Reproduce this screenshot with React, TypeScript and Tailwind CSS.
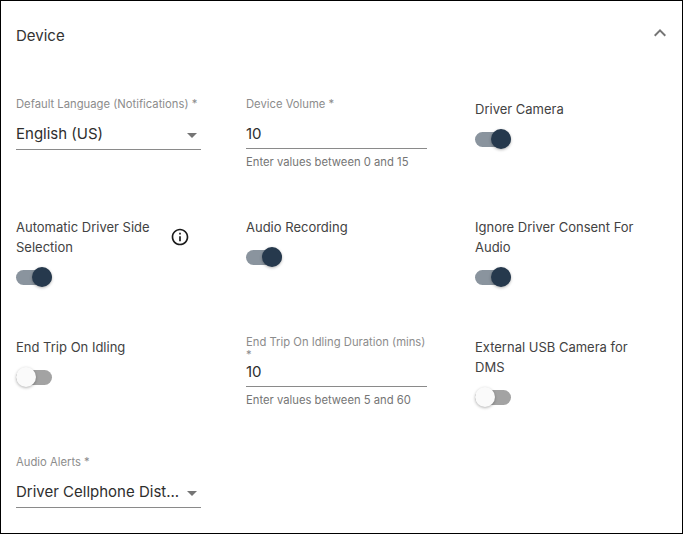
const font = "[font-family:Inter,'Liberation_Sans',sans-serif]"

function Toggle({ on = true }: { on?: boolean }) {
    return (
        <div className="relative h-5 w-9">
            <div className={`absolute left-0 top-[2.5px] h-[15px] w-[36px] rounded-full ${on ? "bg-[#8a949e]" : "bg-[#a3a3a3]"}`} />
            <div
                className={`absolute top-0 size-5 rounded-full shadow-[0_1px_3px_rgba(0,0,0,0.3)] ${on ? "right-0 bg-[#26394d]" : "left-0 bg-[#fafafa]"}`}
            />
        </div>
    )
}

function SwitchField({ label, on = true, info = false, wide = false }: { label: string; on?: boolean; info?: boolean; wide?: boolean }) {
    return (
        <div className="flex flex-col items-start gap-[10px]">
            <div className="flex w-full items-center">
                <div className={`whitespace-pre-line text-[13px] leading-5 text-[#424242] ${wide ? "w-[175px]" : "w-[145px]"}`}>{label}</div>
                {info && (
                    <svg className="ml-[9px] size-5" viewBox="0 0 24 24" fill="#1a1a1a">
                        <path d="M11 7h2v2h-2zm0 4h2v6h-2zm1-9C6.48 2 2 6.48 2 12s4.48 10 10 10 10-4.48 10-10S17.52 2 12 2zm0 18c-4.41 0-8-3.59-8-8s3.59-8 8-8 8 3.59 8 8-3.59 8-8 8z" />
                    </svg>
                )}
            </div>
            <Toggle on={on} />
        </div>
    )
}

function SelectField({ label, value }: { label: string; value: string }) {
    return (
        <div className="flex w-[185px] flex-col">
            <div className="h-4 whitespace-nowrap text-[11.25px] leading-4 text-[#8c8c8c]">{label}</div>
            <div className="mt-[5px] flex h-[33px] items-center justify-between border-b border-[#8a8a8a]">
                <span className="whitespace-nowrap pt-[2px] text-[15px] text-[#2e2e2e]">{value}</span>
                <svg className="-mr-[3px] mt-[3px] size-6 shrink-0" viewBox="0 0 24 24" fill="#757575">
                    <path d="M7 10l5 5 5-5z" />
                </svg>
            </div>
        </div>
    )
}

function NumberField({ label, value, hint }: { label: string; value: string; hint: string }) {
    return (
        <div className="flex w-[181px] flex-col">
            <div className="h-4 pt-[1px] text-[11.25px] leading-[13px] text-[#8c8c8c]">{label}</div>
            <div className="mt-[5px] flex h-[31px] items-center border-b border-[#8a8a8a] pt-[3px] text-[15px] text-[#2e2e2e]">{value}</div>
            <div className="mt-[5px] text-[11.25px] leading-4 text-[#757575]">{hint}</div>
        </div>
    )
}

export default function App() {
    return (
        <div className={`h-[534px] w-[683px] overflow-hidden border border-black bg-white ${font}`}>
            <div className="flex h-[69px] items-start justify-between pl-[15px] pr-[10px] pt-[25px]">
                <span className="text-[15px] leading-5 text-[#333333]">Device</span>
                <svg className="-mt-[5px] size-6" viewBox="0 0 24 24" fill="#757575">
                    <path d="M7.41 15.41 12 10.83l4.59 4.58L18 14l-6-6-6 6z" />
                </svg>
            </div>
            <div className="grid grid-cols-[230px_229px_1fr] grid-rows-[120px_120px_114px_auto] pl-[15px]">
                <div className="pt-[26px]">
                    <SelectField label="Default Language (Notifications) *" value="English (US)" />
                </div>
                <div className="pt-[27px]">
                    <NumberField label="Device Volume *" value="10" hint="Enter values between 0 and 15" />
                </div>
                <div className="pt-[29px]">
                    <SwitchField label="Driver Camera" wide />
                </div>

                <div className="pt-[27px]">
                    <SwitchField label={"Automatic Driver Side\nSelection"} info />
                </div>
                <div className="pt-[27px]">
                    <SwitchField label="Audio Recording" wide />
                </div>
                <div className="pt-[27px]">
                    <SwitchField label={"Ignore Driver Consent For\nAudio"} wide />
                </div>

                <div className="pt-[27px]">
                    <SwitchField label="End Trip On Idling" on={false} wide />
                </div>
                <div className="pt-[25px]">
                    <NumberField label="End Trip On Idling Duration (mins) *" value="10" hint="Enter values between 5 and 60" />
                </div>
                <div className="pt-[27px]">
                    <SwitchField label={"External USB Camera for\nDMS"} on={false} wide />
                </div>

                <div className="col-span-3 pt-[30px]">
                    <SelectField label="Audio Alerts *" value="Driver Cellphone Dist..." />
                </div>
            </div>
        </div>
    )
}
